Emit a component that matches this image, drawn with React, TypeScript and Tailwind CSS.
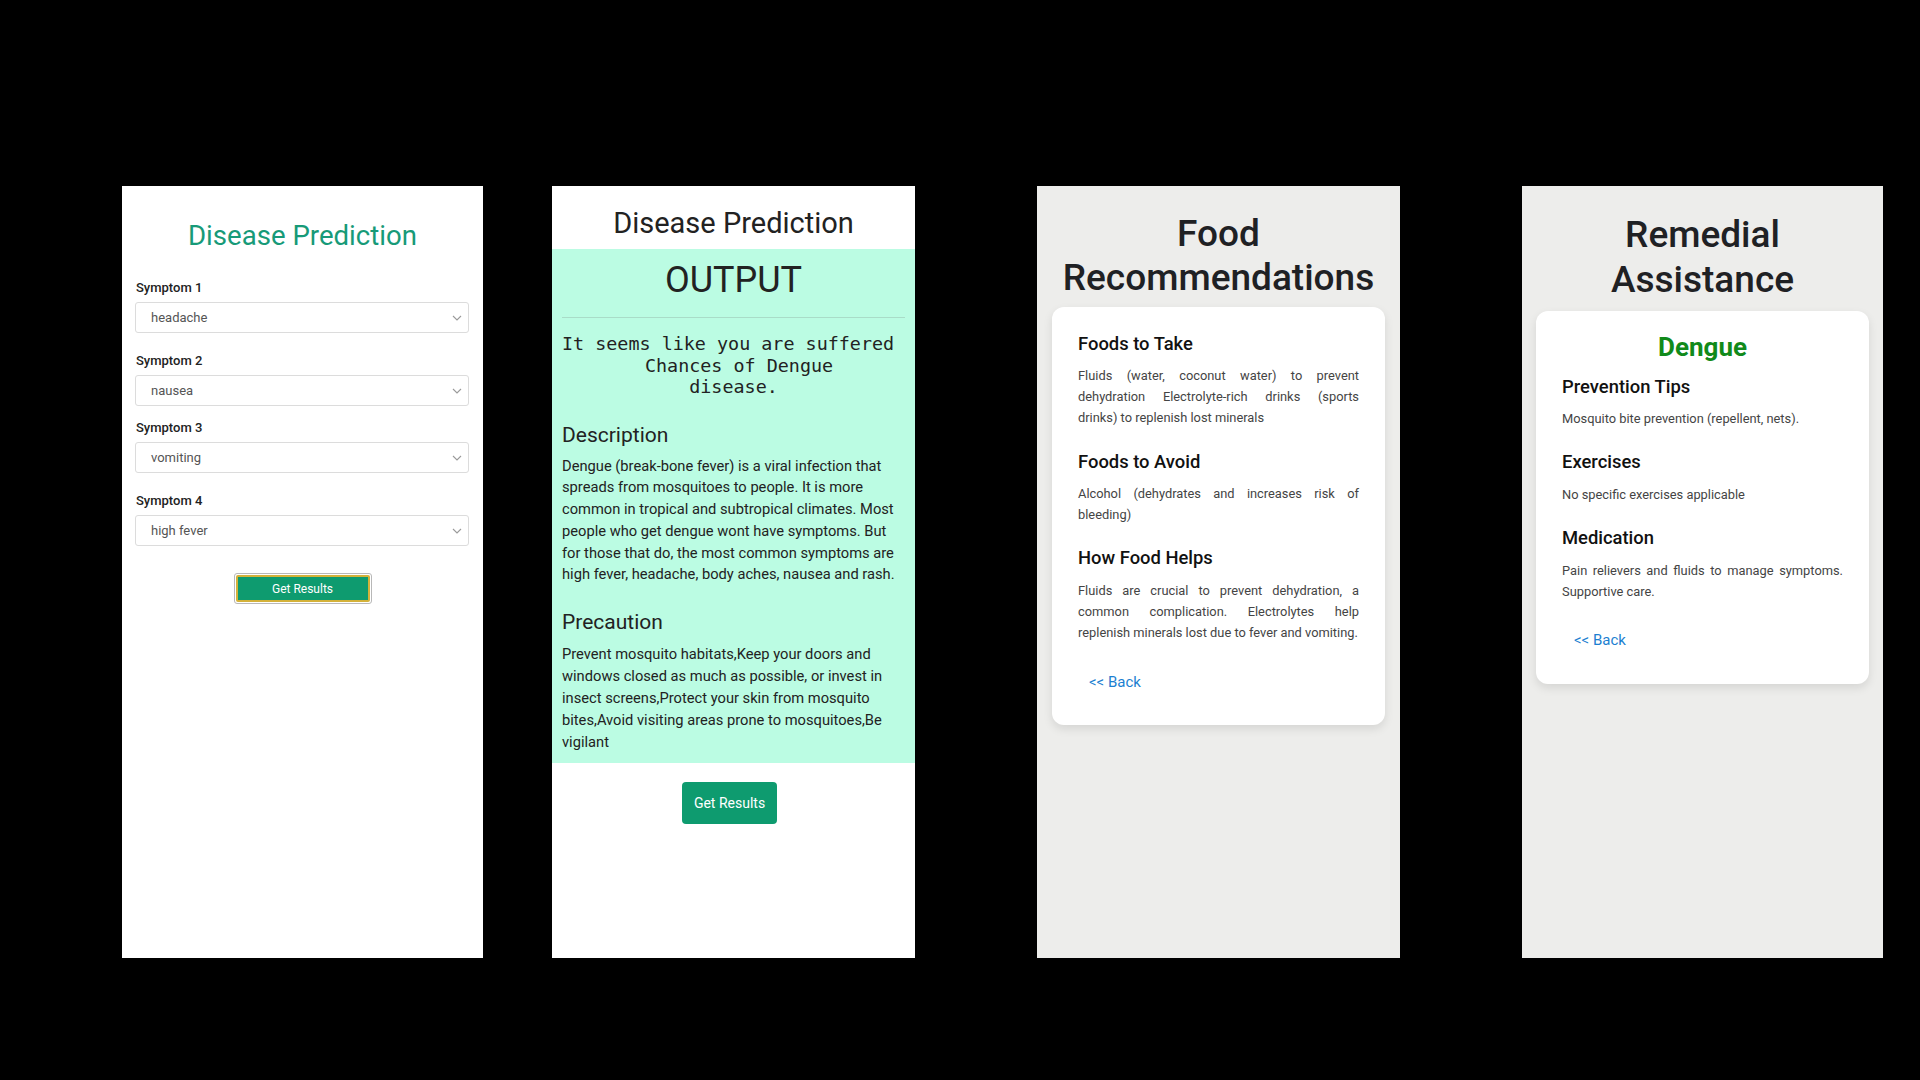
import React from "react";

const roboto = { fontFamily: "Roboto, 'Noto Sans', Arial, sans-serif" } as React.CSSProperties;

function Chevron() {
  return (
    <svg width="10" height="6" viewBox="0 0 10 6" fill="none">
      <path d="M1 1l4 4 4-4" stroke="#9a9a9a" strokeWidth="1.1" />
    </svg>
  );
}

function SymptomField({ label, value, mt }: { label: string; value: string; mt: string }) {
  return (
    <div className={mt}>
      <div className="ml-[1px] text-[13px] leading-[16px] font-medium text-[#222]">{label}</div>
      <div className="mt-[6px] h-[31px] w-[334px] rounded-[3px] border border-[#dcdcdc] bg-white flex items-center justify-between pl-[15px] pr-[6px]">
        <span className="text-[13px] text-[#555]">{value}</span>
        <Chevron />
      </div>
    </div>
  );
}

function Panel1() {
  return (
    <div className="w-[361px] h-[772px] bg-white px-[13px] pt-[34px] flex flex-col" style={roboto}>
      <div className="text-center text-[27.6px] leading-[32px] text-[#179a78]">Disease Prediction</div>
      <SymptomField label="Symptom 1" value="headache" mt="mt-[28px]" />
      <SymptomField label="Symptom 2" value="nausea" mt="mt-[20px]" />
      <SymptomField label="Symptom 3" value="vomiting" mt="mt-[14px]" />
      <SymptomField label="Symptom 4" value="high fever" mt="mt-[20px]" />
      <div className="mt-[27px] flex justify-center">
        <div className="w-[138px] h-[31px] rounded-[3px] border border-[#b8b8b8] p-[1px]">
          <div className="w-full h-full rounded-[2px] border-2 border-[#d4b23a] bg-[#0e9b6f] flex items-center justify-center text-[12px] text-white">
            Get Results
          </div>
        </div>
      </div>
    </div>
  );
}

function Panel2() {
  return (
    <div className="ml-[69px] w-[363px] h-[772px] bg-white flex flex-col" style={roboto}>
      <div className="h-[63px] pt-[20px] text-center text-[29px] leading-[34px] text-[#222]">Disease Prediction</div>
      <div className="bg-[#bbfce3] px-[10px] pb-[10px] text-[#222]">
        <div className="mt-[10px] text-center text-[36px] leading-[42px]">OUTPUT</div>
        <div className="mt-[16px] h-px bg-[#a9dcc8]"></div>
        <div
          className="mt-[15px] text-center text-[18.4px] leading-[21.5px] text-[#222]"
          style={{ fontFamily: "'DejaVu Sans Mono', 'Liberation Mono', monospace" }}
        >
          <div className="whitespace-pre">{"It seems like you are suffered "}</div>
          <div className="whitespace-pre">{" Chances of Dengue"}</div>
          <div className="whitespace-pre">{"disease."}</div>
        </div>
        <div className="mt-[24px] text-[21px] leading-[26px]">Description</div>
        <p className="mt-[8px] pr-[8px] text-[14.7px] leading-[21.8px]">
          Dengue (break-bone fever) is a viral infection that spreads from mosquitoes to people. It is more common in
          tropical and subtropical climates. Most people who get dengue wont have symptoms. But for those that do, the
          most common symptoms are high fever, headache, body aches, nausea and rash.
        </p>
        <div className="mt-[23px] text-[21px] leading-[26px]">Precaution</div>
        <p className="mt-[8px] pr-[8px] text-[14.7px] leading-[22px]">
          Prevent mosquito habitats,Keep your doors and windows closed as much as possible, or invest in insect
          screens,Protect your skin from mosquito bites,Avoid visiting areas prone to mosquitoes,Be vigilant
        </p>
      </div>
      <div className="mt-[19px] flex justify-center pr-[8px]">
        <div className="w-[95px] h-[42px] rounded-[4px] bg-[#0e9b6f] flex items-center justify-center text-[14px] text-white">
          Get Results
        </div>
      </div>
    </div>
  );
}

function Heading({ children, mt }: { children: React.ReactNode; mt: string }) {
  return <div className={`${mt} text-[18.4px] leading-[22px] font-medium text-[#111]`}>{children}</div>;
}

function Para({ lines, mt }: { lines: string[]; mt: string }) {
  return (
    <div className={`${mt} text-[12.85px] leading-[21px] text-[#444]`}>
      {lines.map((l, i) =>
        i < lines.length - 1 ? (
          <div key={i} className="whitespace-nowrap text-justify [text-align-last:justify]">
            {l}
          </div>
        ) : (
          <div key={i} className="whitespace-nowrap">
            {l}
          </div>
        )
      )}
    </div>
  );
}

function Panel3() {
  return (
    <div className="ml-[122px] w-[363px] h-[772px] bg-[#ededeb] px-[15px] pt-[26px] flex flex-col" style={roboto}>
      <div className="text-center text-[37px] leading-[44px] font-medium text-[#1f2124]">
        Food
        <br />
        Recommendations
      </div>
      <div className="mt-[7px] rounded-[12px] bg-white shadow-[0_4px_10px_rgba(0,0,0,0.10)] px-[26px] pt-[26px] pb-[33px]">
        <Heading mt="mt-0">Foods to Take</Heading>
        <Para
          mt="mt-[10px]"
          lines={[
            "Fluids (water, coconut water) to prevent",
            "dehydration Electrolyte-rich drinks (sports",
            "drinks) to replenish lost minerals",
          ]}
        />
        <Heading mt="mt-[23px]">Foods to Avoid</Heading>
        <Para mt="mt-[10px]" lines={["Alcohol (dehydrates and increases risk of", "bleeding)"]} />
        <Heading mt="mt-[22px]">How Food Helps</Heading>
        <Para
          mt="mt-[11px]"
          lines={[
            "Fluids are crucial to prevent dehydration, a",
            "common complication. Electrolytes help",
            "replenish minerals lost due to fever and vomiting.",
          ]}
        />
        <div className="mt-[29px] ml-[11px] text-[15px] leading-[20px] text-[#1c7fd1]">&lt;&lt; Back</div>
      </div>
    </div>
  );
}

function Panel4() {
  return (
    <div className="ml-[122px] w-[361px] h-[772px] bg-[#ededeb] px-[14px] pt-[26px] flex flex-col" style={roboto}>
      <div className="text-center text-[37px] leading-[45px] font-medium text-[#1f2124]">
        Remedial
        <br />
        Assistance
      </div>
      <div className="mt-[9px] rounded-[12px] bg-white shadow-[0_4px_10px_rgba(0,0,0,0.10)] px-[26px] pt-[20px] pb-[34px]">
        <div className="text-center text-[26px] leading-[32px] font-bold text-[#118a1a]">Dengue</div>
        <Heading mt="mt-[13px]">Prevention Tips</Heading>
        <Para mt="mt-[10px]" lines={["Mosquito bite prevention (repellent, nets)."]} />
        <Heading mt="mt-[22px]">Exercises</Heading>
        <Para mt="mt-[11px]" lines={["No specific exercises applicable"]} />
        <Heading mt="mt-[22px]">Medication</Heading>
        <Para mt="mt-[11px]" lines={["Pain relievers and fluids to manage symptoms.", "Supportive care."]} />
        <div className="mt-[28px] ml-[12px] text-[15px] leading-[20px] text-[#1c7fd1]">&lt;&lt; Back</div>
      </div>
    </div>
  );
}

export default function App() {
  return (
    <div className="w-[1920px] h-[1080px] bg-black flex items-start pt-[186px] pl-[122px]">
      <Panel1 />
      <Panel2 />
      <Panel3 />
      <Panel4 />
    </div>
  );
}
